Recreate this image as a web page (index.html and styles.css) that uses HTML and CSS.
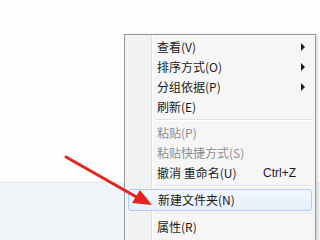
FILE: index.html
```html
<!DOCTYPE html>
<html lang="zh-CN">
<head>
    <meta charset="UTF-8">
    <title>右键菜单</title>
    <link rel="stylesheet" href="styles.css">
</head>
<body>

    <!-- Desktop -->
    <div class="desktop">
        <div class="top-area"></div>
        <div class="bottom-band"></div>
    </div>

    <!-- Context menu -->
    <ul class="menu">
        <li class="item has-sub">查看(V)</li>
        <li class="item has-sub">排序方式(O)</li>
        <li class="item has-sub">分组依据(P)</li>
        <li class="item">刷新(E)</li>
        <li class="sep"></li>
        <li class="item disabled">粘贴(P)</li>
        <li class="item disabled">粘贴快捷方式(S)</li>
        <li class="item"><span>撤消 重命名(U)</span><span class="key">Ctrl+Z</span></li>
        <li class="sep"></li>
        <li class="item active">新建文件夹(N)</li>
        <li class="sep"></li>
        <li class="item">属性(R)</li>
    </ul>

    <!-- Red arrow pointing at the item -->
    <svg class="pointer" width="320" height="240" viewBox="0 0 320 240">
        <line x1="66" y1="157" x2="140" y2="199" stroke="#e5231e" stroke-width="3" stroke-linecap="round"/>
        <polygon points="152,205 132,203 140,190" fill="#e5231e"/>
    </svg>

</body>
</html>
```

FILE: styles.css
```css
* {
    margin: 0;
    padding: 0;
    box-sizing: border-box;
}

body {
    width: 320px;
    height: 240px;
    overflow: hidden;
    font-family: "Noto Sans CJK SC", "Liberation Sans", sans-serif;
    font-size: 12px;
    color: #1b1b1b;
    background: #fefefe;
}

.desktop {
    display: flex;
    flex-direction: column;
    height: 240px;
}

.top-area {
    height: 183px;
    background: #fefefe;
    border-bottom: 1px solid #e4e9f0;
}

.bottom-band {
    flex: 1;
    background: #f1f5fa;
}

/* menu runs off the bottom of the shot, so no bottom border */
.menu {
    position: absolute;
    left: 124px;
    top: 34px;
    width: 192px;
    height: 206px;
    overflow: hidden;
    list-style: none;
    padding: 2px 2px 0 2px;
    background: #f6f6f6 linear-gradient(to right, #f2f2f2 0, #f2f2f2 26px, #e2e3e3 26px, #e2e3e3 27px, #ffffff 27px, #ffffff 28px, #f6f6f6 28px);
    border: 1px solid #979797;
    border-bottom: none;
    box-shadow: 2px 0 2px rgba(0, 0, 0, 0.12);
}

.item {
    position: relative;
    display: flex;
    justify-content: space-between;
    align-items: center;
    height: 20px;
    padding: 0 17px 0 30px;
    line-height: 20px;
    white-space: nowrap;
}

.item.disabled {
    color: #8d8d8d;
}

.item .key {
    font-family: "Liberation Sans", sans-serif;
}

.item.has-sub::after {
    content: "";
    position: absolute;
    right: 8px;
    top: 6px;
    border-top: 4px solid transparent;
    border-bottom: 4px solid transparent;
    border-left: 4px solid #1b1b1b;
}

.item.active {
    height: 22px;
    margin: 0 1px;
    padding-left: 29px;
    border: 1px solid #aecff7;
    border-radius: 3px;
    background: linear-gradient(#f2f7fe, #e6effb);
}

.sep {
    height: 6px;
    margin-left: 28px;
    background: linear-gradient(#f6f6f6 2px, #e2e3e3 2px, #e2e3e3 3px, #ffffff 3px, #ffffff 4px, #f6f6f6 4px);
}

.pointer {
    position: absolute;
    left: 0;
    top: 0;
}
```
